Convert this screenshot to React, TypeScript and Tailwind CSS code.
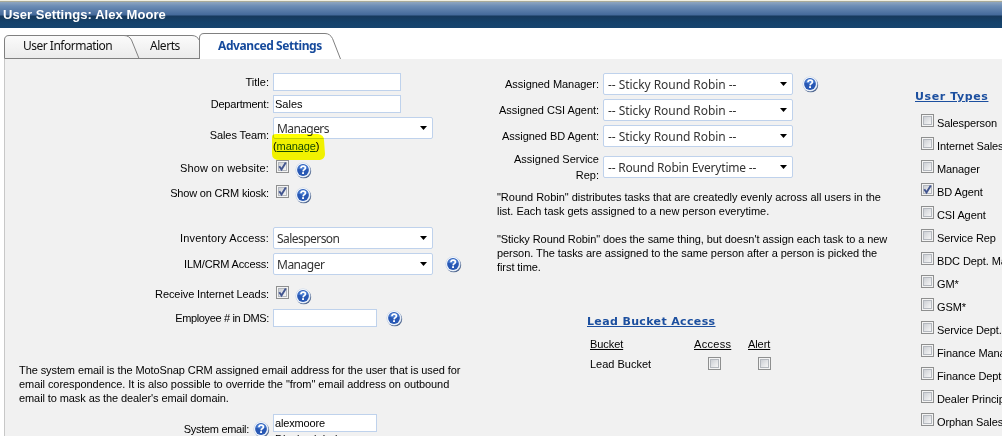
import React from "react";

const ARIAL = "font-['Liberation_Sans',Arial,sans-serif]";
const HUMAN = "font-['Noto_Sans','Open_Sans',sans-serif]";

function Help({ className = "" }: { className?: string }) {
  return (
    <svg className={`shrink-0 ${className}`} width="17" height="17" viewBox="0 0 17 17">
      <circle cx="8.800" cy="8.900" r="7.400" fill="#50678f" />
      <circle cx="8" cy="8" r="7.600" fill="#c9d6ea" />
      <circle cx="8" cy="8" r="6.900" fill="#f4f8fd" />
      <circle cx="8" cy="8" r="5.900" fill="#2858b4" />
      <path d="M3 6.500a5.200 5.200 0 0 1 10 0c-3 1.500-7 1.500-10 0z" fill="#4b7fd4" />
      <path d="M5.900 6.300c.1-1.500 1-2.200 2.300-2.200 1.300 0 2.200.7 2.200 1.900 0 1.600-2.100 1.600-2.300 3.300" fill="none" stroke="#fff" strokeWidth="1.700" />
      <rect x="7.100" y="10.200" width="1.900" height="1.800" fill="#fff" />
    </svg>
  );
}

function Check({ on = false, className = "" }: { on?: boolean; className?: string }) {
  return (
    <span className={`relative block size-[13px] shrink-0 border border-[#8e8f8f] bg-[#f4f4f4] p-px ${className}`}>
      <span className="block size-[9px] border border-[#b4b8be] bg-linear-to-br from-[#cdd0d5] to-[#f6f6f6]" />
      {on && (
        <svg className="absolute left-0 top-0" width="11" height="11" viewBox="0 0 11 11">
          <path d="M2.300 5.200l2.200 3.300L8.800 1.500" fill="none" stroke="#42558f" strokeWidth="1.900" />
        </svg>
      )}
    </span>
  );
}

function Field({ value = "", className = "" }: { value?: string; className?: string }) {
  return (
    <div className={`h-[18px] shrink-0 border border-[#bfd2ec] bg-white pl-px leading-[17px] text-black ${className}`}>{value}</div>
  );
}

function Select({ value, className = "" }: { value: string; className?: string }) {
  return (
    <div className={`flex h-[22px] shrink-0 items-center justify-between rounded-[2px] border border-[#bfd2ec] bg-white pr-[5px] pl-[3px] text-[12px] text-[#333] ${HUMAN} ${className}`}>
      <span className="whitespace-pre pt-px leading-[20px]">{value}</span>
      <svg width="7" height="4" viewBox="0 0 7 4" className="-mt-px">
        <path d="M0 0h7L3.500 4z" fill="#000" />
      </svg>
    </div>
  );
}

function Row({ label, h, pt, children }: { label: string; h: string; pt: string; children: React.ReactNode }) {
  return (
    <div className={`flex items-start ${h}`}>
      <div className={`mr-1 w-[265px] shrink-0 text-right ${pt}`}>{label}</div>
      {children}
    </div>
  );
}

function AgentRow({ label, value, help }: { label: string; value: string; help?: boolean }) {
  return (
    <div className="flex h-[26px] items-start">
      <div className="mr-1 w-[119px] shrink-0 pt-[4px] text-right tracking-[-0.05px]">{label}</div>
      <Select value={value} className="w-[190px] pl-[4px] tracking-[-0.06px]" />
      {help && <Help className="mt-[3px] ml-[9px]" />}
    </div>
  );
}

const TYPES = [
  "Salesperson", "Internet Sales", "Manager", "BD Agent", "CSI Agent", "Service Rep", "BDC Dept. Manager",
  "GM*", "GSM*", "Service Dept.", "Finance Manager", "Finance Dept.", "Dealer Principal", "Orphan Sales",
];

export default function App() {
  return (
    <div className={`flex h-[436px] w-[1002px] flex-col overflow-hidden bg-white text-[11px] leading-[14px] text-black ${ARIAL}`}>
      <div className="h-px shrink-0 bg-[#f0eee0]" />
      <div className="h-px shrink-0 bg-[#a9aa98]" />
      <header className="h-[26px] shrink-0 bg-[linear-gradient(#8fa6c0_0,#6d8db5_4px,#44699a_13px,#17395c_14px,#15416a_20px,#17446f_26px)] pl-[3px] text-[13px] leading-[26px] font-bold tracking-[0.06px] text-white">
        <span className="whitespace-nowrap">User Settings: Alex Moore</span>
      </header>
      <nav className={`relative h-[31px] shrink-0 text-[12px] text-[#111] ${HUMAN}`}>
        <svg className="absolute left-0 top-0" width="350" height="31" viewBox="0 0 350 31">
          <defs>
            <linearGradient id="tab" x1="0" x2="0" y1="0" y2="1">
              <stop offset="0" stopColor="#fbfbfb" />
              <stop offset="1" stopColor="#ebebeb" />
            </linearGradient>
          </defs>
          <path d="M120 30.500V10q0-2.500 3-2.500H192q5 0 7.500 5v18z" fill="url(#tab)" stroke="#808080" />
          <path d="M4.500 30.500V12q0-4.500 4.500-4.500H124q5 0 7.500 4.500L139 30.500z" fill="url(#tab)" stroke="#808080" />
          <path d="M199.500 31V10q0-4.500 4.500-4.500H325q5 0 7.500 5L340.500 31" fill="#fff" stroke="#808080" />
        </svg>
        <div className="relative flex h-full items-center pt-[5px] leading-[26px]">
          <span className="ml-[23px] w-[127px] shrink-0 tracking-[-0.5px] whitespace-nowrap">User Information</span>
          <span className="w-[68px] shrink-0 tracking-[-0.45px]">Alerts</span>
          <span className="font-bold tracking-[-0.42px] whitespace-nowrap text-[#164a9c]">Advanced Settings</span>
        </div>
      </nav>
      <main className="ml-1 flex min-h-0 flex-1 border-l border-[#c8c8c8] bg-[#f1f1f1]">
        <section className="-ml-px w-[476px] shrink-0 pt-[14px]">
          <Row label="Title:" h="h-[22px]" pt="pt-[2px]"><Field className="w-[128px]" /></Row>
          <Row label="Department:" h="h-[22px]" pt="pt-[2px] tracking-[-0.2px]"><Field className="w-[128px]" value="Sales" /></Row>
          <Row label="Sales Team:" h="h-[43px]" pt="pt-[11px] tracking-[-0.1px]">
            <div className="relative">
              <Select value="Managers" className="w-[160px] tracking-[-0.6px]" />
              <div className="flex h-[14px] tracking-[-0.1px]">(<a className="text-[#174a8b] underline">manage</a>)</div>
              <svg className="absolute -left-px top-[17px] mix-blend-multiply" width="54" height="28" viewBox="0 0 54 28">
                <path d="M0 3Q0 0 4 0H46Q52 1 52 6L53 20Q53 25 48 26H8Q0 26 0 20z" fill="#ffff00" />
              </svg>
            </div>
          </Row>
          <Row label="Show on website:" h="h-[25px]" pt="pt-[1px] tracking-[0.18px]"><Check on className="ml-[3px]" /><Help className="mt-[2px] ml-[6px]" /></Row>
          <Row label="Show on CRM kiosk:" h="h-[25px]" pt="pt-[1px] tracking-[-0.18px]"><Check on className="ml-[3px]" /><Help className="mt-[2px] ml-[6px]" /></Row>
          <div className="h-[17px]" />
          <Row label="Inventory Access:" h="h-[26px]" pt="pt-[4px] tracking-[0.16px]"><Select value="Salesperson" className="w-[160px] tracking-[-0.55px]" /></Row>
          <Row label="ILM/CRM Access:" h="h-[26px]" pt="pt-[4px] tracking-[-0.16px]"><Select value="Manager" className="w-[160px] tracking-[-0.5px]" /><Help className="mt-[3px] ml-[12px]" /></Row>
          <div className="h-[7px]" />
          <Row label="Receive Internet Leads:" h="h-[23px]" pt="pt-[1px] tracking-[-0.1px]"><Check on className="ml-[3px]" /><Help className="mt-[2px] ml-[6px]" /></Row>
          <Row label="Employee # in DMS:" h="h-[18px]" pt="pt-[2px] tracking-[-0.36px]"><Field className="w-[104px]" /><Help className="mt-[1px] ml-[9px]" /></Row>
          <p className="mt-9 mb-[9px] ml-[15px] tracking-[-0.09px] whitespace-nowrap">
            The system email is the MotoSnap CRM assigned email address for the user that is used for<br />
            <span className="tracking-[-0.07px]">email corespondence. It is also possible to override the "from" email address on outbound</span><br />
            email to mask as the dealer's email domain.
          </p>
          <div className="flex items-start">
            <div className="w-[245px] shrink-0 pt-2 text-right tracking-[-0.3px]">System email:</div>
            <Help className="mt-[7px] ml-[4px]" />
            <div className="ml-[3px] leading-[14px]">
              <Field className="w-[104px] tracking-[-0.15px]" value="alexmoore" />
              <div className="ml-0.5 whitespace-nowrap">Display label</div>
            </div>
          </div>
        </section>
        <section className="w-[435px] shrink-0 pt-[14px]">
          <AgentRow label="Assigned Manager:" value="-- Sticky Round Robin --" help />
          <AgentRow label="Assigned CSI Agent:" value="-- Sticky Round Robin --" />
          <AgentRow label="Assigned BD Agent:" value="-- Sticky Round Robin --" />
          <div className="flex h-[39px] items-start">
            <div className="mr-1 w-[119px] shrink-0 text-right leading-[16px]">Assigned Service<br />Rep:</div>
            <Select value="-- Round Robin Everytime --" className="mt-[5px] w-[190px] pl-[4px] tracking-[-0.2px]" />
          </div>
          <div className="ml-[17px] tracking-[-0.03px] whitespace-nowrap">
            <p>"Round Robin" distributes tasks that are createdly evenly across all users in the<br />list. Each task gets assigned to a new person everytime.</p>
            <p className="mt-[14px] tracking-[-0.07px]">"Sticky Round Robin" does the same thing, but doesn't assign each task to a new<br />person. The tasks are assigned to the same person after a person is picked the<br />first time.</p>
          </div>
          <div className="mt-[41px] ml-[107px]">
            <h2 className="font-['DejaVu_Sans',Verdana,sans-serif] font-bold tracking-[0.36px] whitespace-nowrap text-[#1c4f9f] underline">Lead Bucket Access</h2>
            <div className="mt-2 ml-[3px] grid grid-cols-[94px_60px_40px] tracking-[-0.08px] underline">
              <span>Bucket</span><span className="ml-[10px] tracking-[0.3px]">Access</span><span className="ml-[4px]">Alert</span>
            </div>
            <div className="mt-[6px] ml-[3px] grid grid-cols-[118px_50px_40px]">
              <span>Lead Bucket</span><Check /><Check />
            </div>
          </div>
        </section>
        <section className="min-w-0 flex-1 overflow-hidden pt-[31px]">
          <h2 className="font-['DejaVu_Sans',Verdana,sans-serif] font-bold tracking-[0.6px] whitespace-nowrap text-[#1c4f9f] underline">User Types</h2>
          <div className="mt-[10px] ml-[6px]">
            {TYPES.map((t) => (
              <div key={t} className="flex h-[23px] items-start">
                <Check on={t === "BD Agent"} />
                <span className="mt-[2px] ml-[3px] tracking-[-0.1px] whitespace-nowrap">{t}</span>
              </div>
            ))}
          </div>
        </section>
      </main>
    </div>
  );
}
